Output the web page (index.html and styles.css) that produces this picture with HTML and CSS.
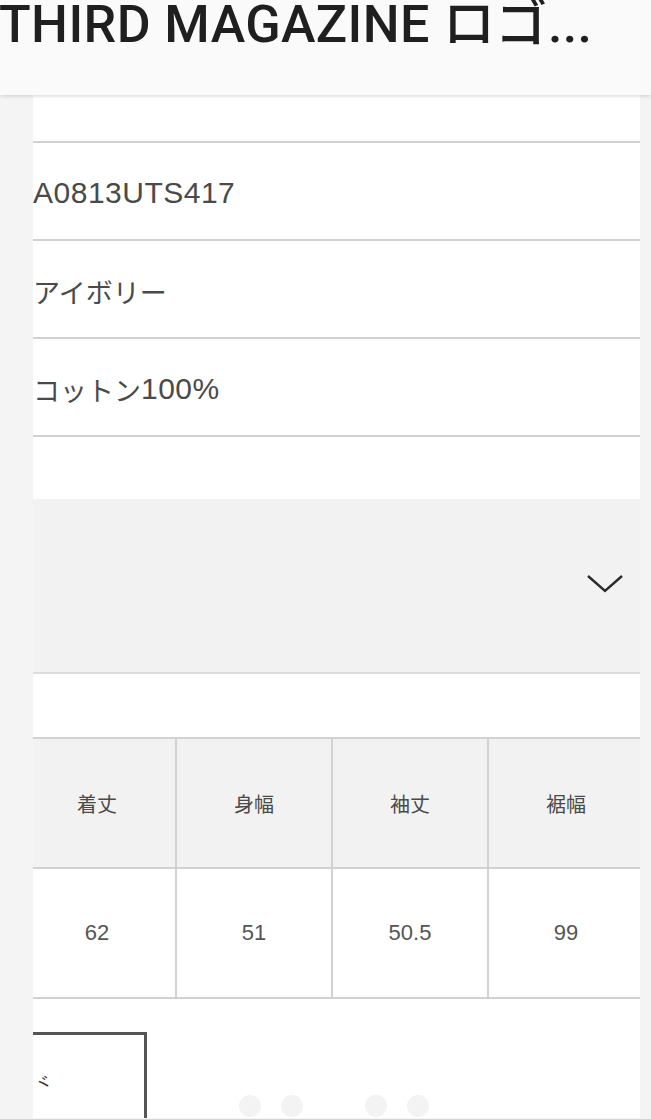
FILE: index.html
```html
<!DOCTYPE html>
<html lang="ja">
<head>
<meta charset="utf-8">
<title>THIRD MAGAZINE</title>
<link rel="stylesheet" href="styles.css">
</head>
<body>
<header class="appbar">
  <h1 class="appbar-title">THIRD MAGAZINE ロゴ...</h1>
</header>
<main class="page">
  <section class="specs">
    <div class="spec-row spec-row-top"></div>
    <div class="spec-row"><span class="latin">A0813UTS417</span></div>
    <div class="spec-row">アイボリー</div>
    <div class="spec-row">コットン<span class="latin">100%</span></div>
  </section>
  <div class="spacer-a"></div>
  <div class="accordion">
    <svg class="chevron" width="38" height="20" viewBox="0 0 38 20" aria-hidden="true">
      <path d="M2 2 L19 17 L36 2" fill="none" stroke="#2b2b2b" stroke-width="2.4"/>
    </svg>
  </div>
  <div class="spacer-b"></div>
  <div class="size-table">
    <div class="cell head">着丈</div>
    <div class="cell head">身幅</div>
    <div class="cell head">袖丈</div>
    <div class="cell head">裾幅</div>
    <div class="cell val">62</div>
    <div class="cell val">51</div>
    <div class="cell val">50.5</div>
    <div class="cell val">99</div>
  </div>
  <section class="related">
    <div class="card"><span class="card-glyph">ヾ</span></div>
    <div class="pager">
      <span class="dot"></span>
      <span class="dot"></span>
      <span class="dot dot-hidden"></span>
      <span class="dot"></span>
      <span class="dot"></span>
    </div>
  </section>
</main>
</body>
</html>
```

FILE: styles.css
```css
* { box-sizing: border-box; }

html, body {
  margin: 0;
  padding: 0;
  background: #f4f4f4;
  height: 1119px;
  overflow: hidden;
}

body {
  font-family: "Liberation Sans", "Noto Sans CJK JP", sans-serif;
  color: #444;
}

.appbar {
  position: relative;
  z-index: 2;
  height: 95px;
  background: #fafafa;
  box-shadow: 0 1px 4px rgba(0, 0, 0, 0.16);
  overflow: hidden;
}

.appbar-title {
  margin: 0 0 0 -1px;
  padding-top: 0;
  font-family: Roboto, "Noto Sans CJK JP", sans-serif;
  font-weight: 500;
  font-size: 52px;
  line-height: 50px;
  letter-spacing: 0.4px;
  color: #1f1f1f;
  white-space: nowrap;
}

.page {
  margin: 0 11px 0 33px;
  background: #fff;
  overflow: hidden;
}

.spec-row {
  height: 98px;
  border-bottom: 2px solid #d2d2d2;
  display: flex;
  align-items: center;
  padding-top: 4px;
  font-size: 27px;
  color: #4a4a4a;
}

.latin {
  font-size: 30px;
  letter-spacing: 0.5px;
}

.spec-row-top {
  height: 48px;
}

.spacer-a {
  height: 62px;
}

.accordion {
  height: 175px;
  background: #f2f2f2;
  border-bottom: 2px solid #dcdcdc;
  display: flex;
  align-items: center;
  justify-content: flex-end;
  padding-right: 16px;
}

.chevron {
  display: block;
  margin-top: -4px;
}

.spacer-b {
  height: 63px;
}

.size-table {
  display: grid;
  grid-template-columns: repeat(4, 156px);
  grid-template-rows: 130px 130px;
  width: 624px;
  margin-left: -14px;
  border-top: 2px solid #d2d2d2;
}

.cell {
  display: flex;
  align-items: center;
  justify-content: center;
  border-bottom: 2px solid #d2d2d2;
  color: #555;
}

.cell:nth-child(4n+2),
.cell:nth-child(4n+3),
.cell:nth-child(4n+4) {
  border-left: 2px solid #d2d2d2;
}

.head {
  background: #f2f2f2;
  font-size: 20px;
  color: #4a4a4a;
}

.val {
  background: #fff;
  font-size: 22px;
}

.related {
  display: flex;
  align-items: flex-start;
  padding-top: 33px;
  height: 119px;
}

.card {
  position: relative;
  flex: 0 0 128px;
  height: 120px;
  margin-left: -14px;
  border: 3px solid #555;
  border-bottom: none;
}

.card-glyph {
  position: absolute;
  left: 12px;
  top: 34px;
  font-size: 18px;
  color: #333;
  transform: rotate(-20deg);
}

.pager {
  display: flex;
  gap: 20px;
  margin-left: 92px;
  margin-top: 63px;
}

.dot {
  width: 22px;
  height: 22px;
  border-radius: 50%;
  background: #f3f3f3;
}

.dot-hidden {
  background: transparent;
}
```
